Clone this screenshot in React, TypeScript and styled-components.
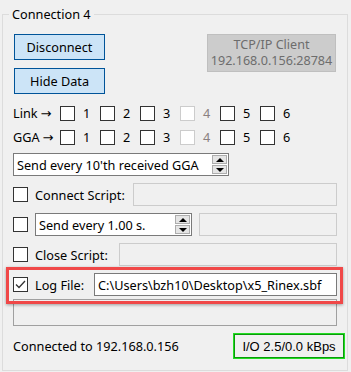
import React from "react";
import styled, { createGlobalStyle } from "styled-components";

const Global = createGlobalStyle`
  html, body { margin: 0; padding: 0; background: #f0f0f0; }
  body { font-family: "Noto Sans", "Open Sans", sans-serif; font-size: 12.7px; color: #000; }
  * { box-sizing: border-box; }
`;

const Group = styled.div`
  position: relative;
  margin: 14px 3px 0 2px;
  height: 357px;
  border: 1px solid #dcdcdc;
  padding: 19px 10px 0 10px;
  display: flex;
  flex-direction: column;
`;

const Legend = styled.div`
  position: absolute;
  top: -10px;
  left: 6px;
  padding: 0 3px;
  background: #f0f0f0;
  line-height: 18px;
`;

const TopRow = styled.div`
  display: flex;
  justify-content: space-between;
  align-items: flex-start;
  height: 60px;
`;

const ButtonCol = styled.div`
  display: flex;
  flex-direction: column;
  gap: 8px;
  margin-left: 1px;
`;

const Button = styled.div`
  width: 91px;
  height: 26px;
  background: #cce4f7;
  border: 1px solid #005499;
  display: flex;
  align-items: center;
  justify-content: center;
`;

const InfoBox = styled.div`
  width: 129px;
  height: 38px;
  margin-right: 1px;
  background: #cccccc;
  border: 1px solid #bfbfbf;
  color: #6d6d6d;
  font-size: 12.6px;
  display: flex;
  flex-direction: column;
  align-items: center;
  justify-content: center;
  line-height: 16px;
`;

const CheckRow = styled.div<{ $mt?: number }>`
  display: flex;
  align-items: center;
  height: 24px;
  margin-top: ${(p) => p.$mt ?? 0}px;
`;

const RowLabel = styled.div`
  width: 47px;
  display: flex;
  align-items: center;
  gap: 3px;
`;

const ArrowGlyph = styled.span`
  font-family: "DejaVu Sans", sans-serif;
  font-size: 13px;
`;

const Item = styled.div<{ $disabled?: boolean }>`
  display: flex;
  align-items: center;
  width: 40px;
  gap: 8px;
  color: ${(p) => (p.$disabled ? "#8a8080" : "#000")};
`;

const Box = styled.div<{ $disabled?: boolean }>`
  width: 15px;
  height: 15px;
  flex: none;
  border: 1px solid ${(p) => (p.$disabled ? "#cccccc" : "#333333")};
  background: #ffffff;
  display: flex;
  align-items: center;
  justify-content: center;
`;

const Spin = styled.div<{ $w: number }>`
  width: ${(p) => p.$w}px;
  height: 23px;
  flex: none;
  border: 1px solid #7a7a7a;
  background: #fff;
  display: flex;
  align-items: center;
  padding: 0 1px 0 3px;
`;

const SpinText = styled.div`
  flex: 1;
  white-space: nowrap;
  overflow: hidden;
`;

const SpinButtons = styled.div`
  width: 15px;
  height: 19px;
  flex: none;
  display: flex;
  flex-direction: column;
  gap: 1px;
`;

const SpinBtn = styled.div`
  flex: 1;
  background: #e5e5e5;
  border: 1px solid #adadad;
  display: flex;
  align-items: center;
  justify-content: center;
`;

const Arrow = styled.div<{ $up?: boolean }>`
  width: 0;
  height: 0;
  border-left: 4px solid transparent;
  border-right: 4px solid transparent;
  ${(p) => (p.$up ? "border-bottom: 4px solid #000;" : "border-top: 4px solid #000;")}
`;

const FieldRows = styled.div`
  display: flex;
  flex-direction: column;
  gap: 7px;
  margin-top: 4px;
`;

const FieldRow = styled.div`
  position: relative;
  display: flex;
  align-items: center;
  height: 23px;
  gap: 7px;
`;

const Label = styled.div<{ $w: number }>`
  width: ${(p) => p.$w}px;
  flex: none;
  white-space: nowrap;
`;

const Field = styled.div<{ $active?: boolean }>`
  flex: 1;
  height: 23px;
  border: 1px solid ${(p) => (p.$active ? "#7a7a7a" : "#cccccc")};
  background: ${(p) => (p.$active ? "#ffffff" : "#f0f0f0")};
  display: flex;
  align-items: center;
  padding: 0 3px;
  white-space: nowrap;
  overflow: hidden;
`;

const Highlight = styled.div`
  position: absolute;
  left: -7px;
  right: -6px;
  top: -6px;
  bottom: -8px;
  border: 3px solid #f04848;
  box-shadow: 0 1px 3px rgba(0, 0, 0, 0.35);
  pointer-events: none;
`;

const Memo = styled.div`
  height: 27px;
  margin-top: 3px;
  border: 1px solid #a0a0a0;
  background: #f0f0f0;
`;

const StatusRow = styled.div`
  display: flex;
  justify-content: space-between;
  align-items: center;
  margin-top: 7px;
`;

const Rate = styled.div`
  width: 112px;
  height: 26px;
  margin-right: -8px;
  border: 1px solid #22dd22;
  box-shadow: inset 0 0 0 1px #0b9a0b;
  font-family: "Liberation Sans", Arial, sans-serif;
  font-size: 13px;
  display: flex;
  align-items: center;
  justify-content: center;
`;

const Check = ({ checked, disabled }: { checked?: boolean; disabled?: boolean }) => (
  <Box $disabled={disabled}>
    {checked && (
      <svg width="11" height="9" viewBox="0 0 11 9">
        <polyline points="1,4.5 4,7.5 10,1" fill="none" stroke="#333" strokeWidth="1.3" />
      </svg>
    )}
  </Box>
);

const SpinBox = ({ w, text }: { w: number; text: string }) => (
  <Spin $w={w}>
    <SpinText>{text}</SpinText>
    <SpinButtons>
      <SpinBtn>
        <Arrow $up />
      </SpinBtn>
      <SpinBtn>
        <Arrow />
      </SpinBtn>
    </SpinButtons>
  </Spin>
);

const ChannelRow = ({ label, mt }: { label: string; mt?: number }) => (
  <CheckRow $mt={mt}>
    <RowLabel>
      {label}
      <ArrowGlyph>→</ArrowGlyph>
    </RowLabel>
    {[1, 2, 3, 4, 5, 6].map((n) => (
      <Item key={n} $disabled={n === 4}>
        <Check disabled={n === 4} />
        {n}
      </Item>
    ))}
  </CheckRow>
);

export default function App() {
  return (
    <>
      <Global />
      <Group>
        <Legend>Connection 4</Legend>
        <TopRow>
          <ButtonCol>
            <Button>Disconnect</Button>
            <Button>Hide Data</Button>
          </ButtonCol>
          <InfoBox>
            <div>TCP/IP Client</div>
            <div>192.168.0.156:28784</div>
          </InfoBox>
        </TopRow>
        <ChannelRow label="Link" mt={7} />
        <ChannelRow label="GGA" />
        <FieldRows>
          <SpinBox w={216} text="Send every 10'th received GGA" />
          <FieldRow>
            <Check />
            <Label $w={91}>Connect Script:</Label>
            <Field />
          </FieldRow>
          <FieldRow>
            <Check />
            <SpinBox w={157} text="Send every 1.00 s." />
            <Field />
          </FieldRow>
          <FieldRow>
            <Check />
            <Label $w={77}>Close Script:</Label>
            <Field />
          </FieldRow>
          <FieldRow>
            <Check checked />
            <Label $w={52}>Log File:</Label>
            <Field $active>C:\Users\bzh10\Desktop\x5_Rinex.sbf</Field>
            <Highlight />
          </FieldRow>
        </FieldRows>
        <Memo />
        <StatusRow>
          <div>Connected to 192.168.0.156</div>
          <Rate>I/O 2.5/0.0 kBps</Rate>
        </StatusRow>
      </Group>
    </>
  );
}
